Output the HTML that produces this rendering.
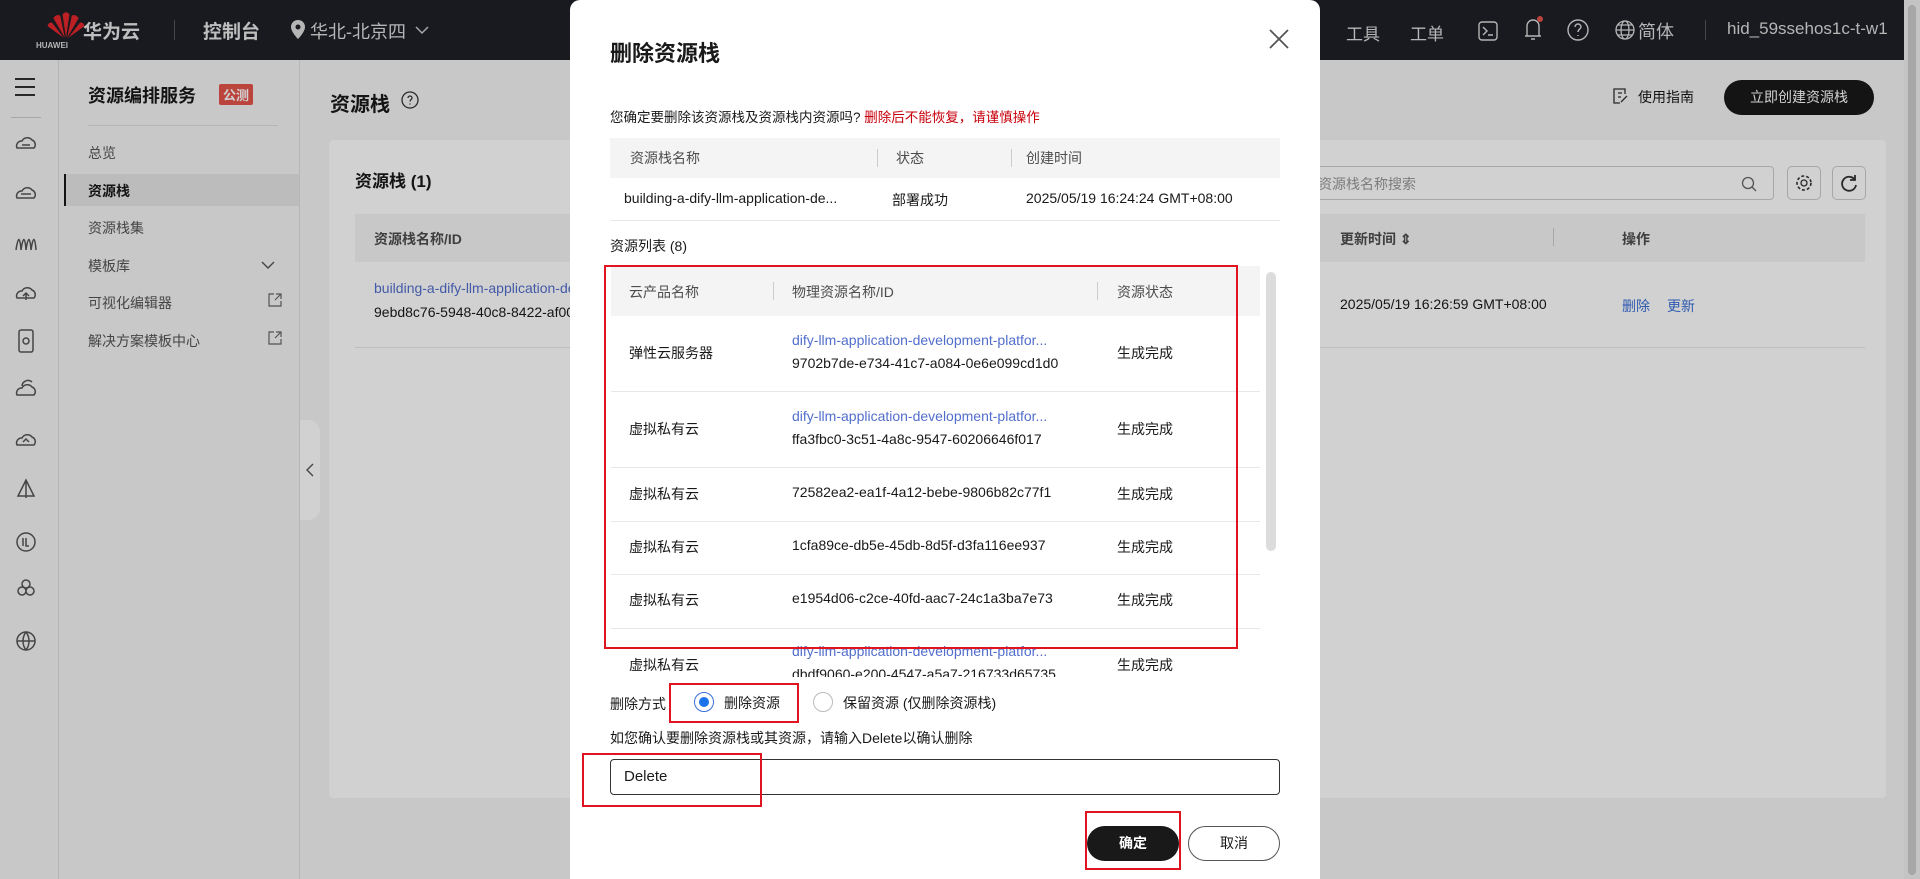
<!DOCTYPE html>
<html><head><meta charset="utf-8"><style>
*{box-sizing:border-box;margin:0;padding:0}
body{width:1920px;height:879px;overflow:hidden;position:relative;background:#f4f4f4;font-family:"Liberation Sans","Noto Sans CJK SC",sans-serif;font-size:14px;color:#191919}
.a{position:absolute;white-space:nowrap}
.hdr{left:0;top:0;width:1920px;height:60px;background:#1e2028;color:#d8d8d8}
.lnk{color:#526ecc}
.ov{left:0;top:0;width:1920px;height:879px;background:rgba(0,0,0,0.18)}
.modal{left:570px;top:0;width:750px;height:879px;background:#fff;border-radius:10px 10px 0 0}
.th{background:#f4f4f4;color:#4d4d4d}
.red{border:2px solid #e0141e}
.line{height:1px;background:#e8e8e8}
.vd{width:1px;height:18px;background:#ccc}
.ico{stroke:#555;fill:none;stroke-width:1.5}
</style></head><body>
<div class="a hdr"></div>
<svg class="a" style="left:46px;top:10px" width="40" height="30" viewBox="0 0 34 26"><g fill="#e6262d"><path d="M17 24 L14 4 Q17 0 20 4Z"/><path d="M16 24 L6 7 Q9 3 12 5Z"/><path d="M18 24 L28 7 Q25 3 22 5Z"/><path d="M15 24 L1 14 Q2 10 5 11Z"/><path d="M19 24 L33 14 Q32 10 29 11Z"/></g></svg>
<div class="a" style="left:28px;top:41px;font-size:8px;color:#ddd;font-weight:bold;width:48px;text-align:center">HUAWEI</div>
<div class="a" style="left:83px;top:17px;font-size:19px;color:#e8e8e8;font-weight:bold">华为云</div>
<div class="a" style="left:174px;top:20px;width:1px;height:20px;background:#555"></div>
<div class="a" style="left:203px;top:17px;font-size:19px;color:#e8e8e8;font-weight:bold">控制台</div>
<svg class="a" style="left:291px;top:20px" width="14" height="20" viewBox="0 0 14 20"><path d="M7 0C3 0 0 3 0 7c0 5 7 12 7 12s7-7 7-12C14 3 11 0 7 0z" fill="#ddd"/><circle cx="7" cy="7" r="2.5" fill="#1e2028"/></svg>
<div class="a" style="left:310px;top:18px;font-size:18px;color:#ddd">华北-北京四</div>
<svg class="a" style="left:415px;top:25px" width="14" height="10"><path d="M1 2l6 6 6-6" stroke="#ccc" fill="none" stroke-width="1.5"/></svg>
<div class="a" style="left:1346px;top:20px;font-size:17px;color:#ddd">工具</div>
<div class="a" style="left:1410px;top:20px;font-size:17px;color:#ddd">工单</div>
<svg class="a" style="left:1478px;top:21px" width="20" height="20"><rect x="1" y="1" width="18" height="18" rx="3" stroke="#ddd" fill="none" stroke-width="1.4"/><path d="M5 6l4 4-4 4M10 14h5" stroke="#ddd" fill="none" stroke-width="1.4"/></svg>
<svg class="a" style="left:1521px;top:15px" width="24" height="28"><path d="M4 21h16M6 21V11a6 6 0 0112 0v10M10 24h4" stroke="#ddd" fill="none" stroke-width="1.4"/><circle cx="19" cy="4" r="3" fill="#e5534b"/></svg>
<svg class="a" style="left:1567px;top:19px" width="22" height="22"><circle cx="11" cy="11" r="10" stroke="#ddd" fill="none" stroke-width="1.4"/><path d="M8 8a3 3 0 116 0c0 2-3 2-3 5M11 16v1" stroke="#ddd" fill="none" stroke-width="1.4"/></svg>
<svg class="a" style="left:1615px;top:20px" width="20" height="20"><circle cx="10" cy="10" r="9" stroke="#ddd" fill="none" stroke-width="1.3"/><ellipse cx="10" cy="10" rx="4" ry="9" stroke="#ddd" fill="none" stroke-width="1.3"/><path d="M1 10h18M3 5h14M3 15h14" stroke="#ddd" stroke-width="1.2"/></svg>
<div class="a" style="left:1638px;top:18px;font-size:18px;color:#ddd">简体</div>
<div class="a" style="left:1705px;top:20px;width:1px;height:20px;background:#555"></div>
<div class="a" style="left:1727px;top:19px;font-size:17px;color:#ddd">hid_59ssehos1c-t-w1</div>
<div class="a" style="left:0;top:60px;width:59px;height:819px;background:#f4f4f4;border-right:1px solid #ddd"></div>
<div class="a" style="left:15px;top:78px;width:20px;height:2px;background:#333;box-shadow:0 8px 0 #333,0 16px 0 #333"></div>
<div class="a" style="left:11px;top:117px;width:30px;height:1px;background:#ccc"></div>
<svg class="a" style="left:14px;top:130px" width="24" height="540" viewBox="0 0 24 540">
<g class="ico"><path d="M3 18a5 5 0 015-7 6 6 0 0110-1 5 5 0 012 8z"/><path d="M8 15h8"/>
<path d="M3 68a5 5 0 015-7 6 6 0 0110-1 5 5 0 012 8z"/><path d="M7 64h10"/>
<path d="M2 120c2-14 4-14 5 0c2-14 4-14 5 0c2-14 4-14 5 0c2-14 4-14 5 0"/>
<path d="M3 168a5 5 0 015-7 6 6 0 0110-1 5 5 0 012 8z M12 170v-7M9 166l3-3 3 3"/>
<rect x="5" y="200" width="14" height="22" rx="2"/><circle cx="12" cy="211" r="3"/>
<path d="M3 265a5 5 0 015-7 6 6 0 0110-1 5 5 0 012 8z M8 256a6 6 0 0110-4"/>
<path d="M3 315a5 5 0 015-7 6 6 0 0110-1 5 5 0 012 8z M9 312l3-3 3 3"/>
<path d="M12 350v18M4 366l8-16 8 16z"/>
<circle cx="12" cy="412" r="9"/><path d="M9 408v8M12 408v8h3"/>
<circle cx="12" cy="454" r="4"/><circle cx="8" cy="461" r="4"/><circle cx="16" cy="461" r="4"/>
<circle cx="12" cy="511" r="9"/><path d="M3 511h18M12 502c-4 5-4 13 0 18M12 502c4 5 4 13 0 18"/></g></svg>
<div class="a" style="left:60px;top:60px;width:240px;height:819px;background:#f4f4f4;border-right:1px solid #e0e0e0"></div>
<div class="a" style="left:88px;top:82px;font-size:18px;font-weight:bold">资源编排服务</div>
<div class="a" style="left:219px;top:84px;background:#e5534b;color:#fff;font-size:13px;font-weight:bold;padding:1px 4px;border-radius:2px">公测</div>
<div class="a" style="left:88px;top:125px;width:190px;height:1px;background:#ddd"></div>
<div class="a" style="left:88px;top:143px;color:#555">总览</div>
<div class="a" style="left:64px;top:174px;width:235px;height:32px;background:#e6e6e6;border-left:2px solid #191919"></div>
<div class="a" style="left:88px;top:181px;font-weight:bold">资源栈</div>
<div class="a" style="left:88px;top:218px;color:#555">资源栈集</div>
<div class="a" style="left:88px;top:256px;color:#555">模板库</div>
<svg class="a" style="left:261px;top:260px" width="14" height="10"><path d="M1 2l6 6 6-6" stroke="#555" fill="none" stroke-width="1.4"/></svg>
<div class="a" style="left:88px;top:293px;color:#555">可视化编辑器</div>
<div class="a" style="left:88px;top:331px;color:#555">解决方案模板中心</div>
<svg class="a" style="left:268px;top:293px" width="14" height="54"><path d="M6 1H1v12h12V8M8 1h5v5M13 1L7 7M6 39H1v12h12v-5M8 39h5v5M13 39l-6 6" stroke="#666" fill="none" stroke-width="1.2"/></svg>
<div class="a" style="left:300px;top:420px;width:20px;height:100px;background:#fff;border-radius:0 12px 12px 0"></div>
<svg class="a" style="left:305px;top:463px" width="10" height="14"><path d="M8 1L2 7l6 6" stroke="#555" fill="none" stroke-width="1.4"/></svg>
<div class="a" style="left:330px;top:88px;font-size:20px;font-weight:bold">资源栈</div>
<svg class="a" style="left:401px;top:91px" width="18" height="18"><circle cx="9" cy="9" r="8" stroke="#333" fill="none" stroke-width="1.3"/><path d="M7 7a2 2 0 114 0c0 1.5-2 1.5-2 3.5M9 12.5v1" stroke="#333" fill="none" stroke-width="1.3"/></svg>
<svg class="a" style="left:1613px;top:88px" width="16" height="16"><path d="M12 6V1H1v14h6M5 5h4M5 9h3M8 14l6-6" stroke="#333" fill="none" stroke-width="1.3"/></svg>
<div class="a" style="left:1638px;top:87px">使用指南</div>
<div class="a" style="left:1724px;top:80px;width:150px;height:35px;background:#191919;color:#fff;border-radius:18px;text-align:center;line-height:35px;font-size:14px">立即创建资源栈</div>
<div class="a" style="left:329px;top:140px;width:1557px;height:658px;background:#fff;border-radius:4px"></div>
<div class="a" style="left:355px;top:167px;font-size:17px;font-weight:bold">资源栈 (1)</div>
<div class="a" style="left:1300px;top:166px;width:474px;height:34px;border:1px solid #ccc;border-radius:4px"></div>
<div class="a" style="left:1318px;top:174px;color:#999">资源栈名称搜索</div>
<svg class="a" style="left:1741px;top:176px" width="16" height="16"><circle cx="7" cy="7" r="5.5" stroke="#666" fill="none" stroke-width="1.3"/><path d="M11 11l4 4" stroke="#666" stroke-width="1.3"/></svg>
<div class="a" style="left:1787px;top:166px;width:34px;height:34px;border:1px solid #ccc;border-radius:5px"></div>
<svg class="a" style="left:1795px;top:174px" width="18" height="18"><circle cx="9" cy="9" r="3" stroke="#333" fill="none" stroke-width="1.3"/><circle cx="9" cy="9" r="7" stroke="#333" fill="none" stroke-width="1.6" stroke-dasharray="3 2"/></svg>
<div class="a" style="left:1832px;top:166px;width:34px;height:34px;border:1px solid #ccc;border-radius:5px"></div>
<svg class="a" style="left:1840px;top:174px" width="18" height="18"><path d="M15 6A7 7 0 1016 11" stroke="#333" fill="none" stroke-width="1.8"/><path d="M15 1v5h-5" stroke="#333" fill="none" stroke-width="1.8"/></svg>
<div class="a th" style="left:355px;top:214px;width:1510px;height:48px"></div>
<div class="a" style="left:374px;top:229px;color:#4d4d4d;font-weight:bold">资源栈名称/ID</div>
<div class="a" style="left:1340px;top:229px;color:#4d4d4d;font-weight:bold">更新时间 ⇕</div>
<div class="a vd" style="left:1553px;top:228px"></div>
<div class="a" style="left:1622px;top:229px;color:#4d4d4d;font-weight:bold">操作</div>
<div class="a lnk" style="left:374px;top:280px">building-a-dify-llm-application-development-platform</div>
<div class="a" style="left:374px;top:304px">9ebd8c76-5948-40c8-8422-af00000000</div>
<div class="a" style="left:1340px;top:296px">2025/05/19 16:26:59 GMT+08:00</div>
<div class="a" style="left:1622px;top:296px;color:#3a6fd8">删除</div>
<div class="a" style="left:1667px;top:296px;color:#3a6fd8">更新</div>
<div class="a line" style="left:355px;top:347px;width:1510px"></div>
<div class="a" style="left:1904px;top:0;width:16px;height:879px;background:#f0f0f0"></div>
<div class="a" style="left:1908px;top:5px;width:8px;height:870px;background:#ccc;border-radius:4px"></div>
<div class="a ov"></div>
<div class="a modal"></div>
<div class="a" style="left:610px;top:36px;font-size:22px;font-weight:bold">删除资源栈</div>
<svg class="a" style="left:1269px;top:29px" width="20" height="20"><path d="M1 1l18 18M19 1L1 19" stroke="#555" stroke-width="1.8"/></svg>
<div class="a" style="left:610px;top:106px;font-size:13.5px">您确定要删除该资源栈及资源栈内资源吗? <span style="color:#c7000b">删除后不能恢复，请谨慎操作</span></div>
<div class="a th" style="left:610px;top:138px;width:670px;height:40px"></div>
<div class="a" style="left:630px;top:148px;color:#4d4d4d">资源栈名称</div>
<div class="a vd" style="left:877px;top:149px"></div>
<div class="a" style="left:896px;top:148px;color:#4d4d4d">状态</div>
<div class="a vd" style="left:1011px;top:149px"></div>
<div class="a" style="left:1026px;top:148px;color:#4d4d4d">创建时间</div>
<div class="a" style="left:624px;top:190px">building-a-dify-llm-application-de...</div>
<div class="a" style="left:892px;top:190px">部署成功</div>
<div class="a" style="left:1026px;top:190px">2025/05/19 16:24:24 GMT+08:00</div>
<div class="a line" style="left:610px;top:220px;width:670px"></div>
<div class="a" style="left:610px;top:236px">资源列表 (8)</div>
<div class="a" style="left:611px;top:266px;width:649px;height:411px;overflow:hidden">
 <div class="a th" style="left:0;top:0;width:649px;height:50px"></div>
 <div class="a" style="left:18px;top:16px;color:#4d4d4d">云产品名称</div>
 <div class="a vd" style="left:162px;top:16px"></div>
 <div class="a" style="left:181px;top:16px;color:#4d4d4d">物理资源名称/ID</div>
 <div class="a vd" style="left:486px;top:16px"></div>
 <div class="a" style="left:506px;top:16px;color:#4d4d4d">资源状态</div>
 <div class="a" style="left:18px;top:77px">弹性云服务器</div>
 <div class="a lnk" style="left:181px;top:66px">dify-llm-application-development-platfor...</div>
 <div class="a" style="left:181px;top:89px">9702b7de-e734-41c7-a084-0e6e099cd1d0</div>
 <div class="a" style="left:506px;top:77px">生成完成</div>
 <div class="a line" style="left:0;top:125px;width:649px"></div>
 <div class="a" style="left:18px;top:153px">虚拟私有云</div>
 <div class="a lnk" style="left:181px;top:142px">dify-llm-application-development-platfor...</div>
 <div class="a" style="left:181px;top:165px">ffa3fbc0-3c51-4a8c-9547-60206646f017</div>
 <div class="a" style="left:506px;top:153px">生成完成</div>
 <div class="a line" style="left:0;top:201px;width:649px"></div>
 <div class="a" style="left:18px;top:218px">虚拟私有云</div>
 <div class="a" style="left:181px;top:218px">72582ea2-ea1f-4a12-bebe-9806b82c77f1</div>
 <div class="a" style="left:506px;top:218px">生成完成</div>
 <div class="a line" style="left:0;top:255px;width:649px"></div>
 <div class="a" style="left:18px;top:271px">虚拟私有云</div>
 <div class="a" style="left:181px;top:271px">1cfa89ce-db5e-45db-8d5f-d3fa116ee937</div>
 <div class="a" style="left:506px;top:271px">生成完成</div>
 <div class="a line" style="left:0;top:308px;width:649px"></div>
 <div class="a" style="left:18px;top:324px">虚拟私有云</div>
 <div class="a" style="left:181px;top:324px">e1954d06-c2ce-40fd-aac7-24c1a3ba7e73</div>
 <div class="a" style="left:506px;top:324px">生成完成</div>
 <div class="a line" style="left:0;top:362px;width:649px"></div>
 <div class="a" style="left:18px;top:389px">虚拟私有云</div>
 <div class="a lnk" style="left:181px;top:377px">dify-llm-application-development-platfor...</div>
 <div class="a" style="left:181px;top:400px">dbdf9060-e200-4547-a5a7-216733d65735</div>
 <div class="a" style="left:506px;top:389px">生成完成</div>
</div>
<div class="a" style="left:1266px;top:272px;width:10px;height:279px;background:#dcdcdc;border-radius:5px"></div>
<div class="a red" style="left:604px;top:265px;width:634px;height:384px"></div>
<div class="a" style="left:610px;top:694px">删除方式</div>
<div class="a" style="left:694px;top:692px;width:20px;height:20px;border:1px solid #3a6fd8;border-radius:50%"></div>
<div class="a" style="left:699px;top:697px;width:10px;height:10px;background:#1a73e8;border-radius:50%"></div>
<div class="a" style="left:724px;top:693px">删除资源</div>
<div class="a" style="left:813px;top:692px;width:20px;height:20px;border:1px solid #bbb;border-radius:50%"></div>
<div class="a" style="left:843px;top:693px">保留资源 (仅删除资源栈)</div>
<div class="a red" style="left:669px;top:683px;width:130px;height:40px"></div>
<div class="a" style="left:610px;top:728px">如您确认要删除资源栈或其资源，请输入Delete以确认删除</div>
<div class="a" style="left:610px;top:759px;width:670px;height:36px;border:1px solid #333;border-radius:4px"></div>
<div class="a" style="left:624px;top:768px;font-size:15px">Delete</div>
<div class="a red" style="left:582px;top:753px;width:180px;height:54px"></div>
<div class="a" style="left:1087px;top:826px;width:92px;height:35px;background:#191919;color:#fff;border-radius:18px;text-align:center;line-height:35px;font-weight:bold">确定</div>
<div class="a" style="left:1188px;top:826px;width:92px;height:35px;border:1px solid #555;border-radius:18px;text-align:center;line-height:33px">取消</div>
<div class="a red" style="left:1085px;top:811px;width:96px;height:59px"></div>
</body></html>
